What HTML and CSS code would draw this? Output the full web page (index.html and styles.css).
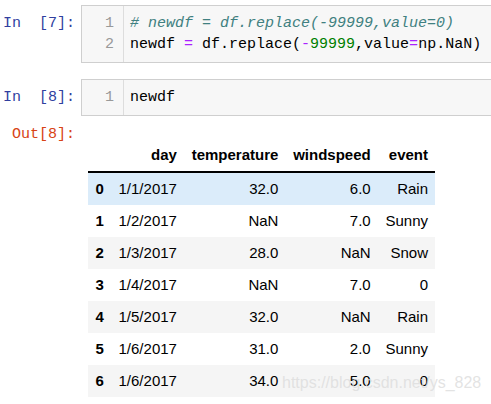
FILE: index.html
```html
<!DOCTYPE html>
<html>
<head>
<meta charset="utf-8">
<link rel="stylesheet" href="styles.css">
</head>
<body>
<div class="nb">
  <div class="cell">
    <div class="prompt in">In&nbsp;&nbsp;[7]:</div>
    <div class="box">
      <div class="gutter"><div>1</div><div>2</div></div>
      <div class="code">
        <div class="line"><span class="c"># newdf = df.replace(-99999,value=0)</span></div>
        <div class="line">newdf <span class="o">=</span> df.replace(<span class="o">-</span><span class="m">99999</span>,value<span class="o">=</span>np.NaN)</div>
      </div>
    </div>
  </div>
  <div class="cell">
    <div class="prompt in">In&nbsp;&nbsp;[8]:</div>
    <div class="box">
      <div class="gutter"><div>1</div></div>
      <div class="code">
        <div class="line">newdf</div>
      </div>
    </div>
  </div>
  <div class="output">
    <div class="prompt out">Out[8]:</div>
    <div class="result">
      <table class="df">
        <thead>
          <tr><th></th><th>day</th><th>temperature</th><th>windspeed</th><th>event</th></tr>
        </thead>
        <tbody>
          <tr class="hover"><th>0</th><td>1/1/2017</td><td>32.0</td><td>6.0</td><td>Rain</td></tr>
          <tr><th>1</th><td>1/2/2017</td><td>NaN</td><td>7.0</td><td>Sunny</td></tr>
          <tr><th>2</th><td>1/3/2017</td><td>28.0</td><td>NaN</td><td>Snow</td></tr>
          <tr><th>3</th><td>1/4/2017</td><td>NaN</td><td>7.0</td><td>0</td></tr>
          <tr><th>4</th><td>1/5/2017</td><td>32.0</td><td>NaN</td><td>Rain</td></tr>
          <tr><th>5</th><td>1/6/2017</td><td>31.0</td><td>2.0</td><td>Sunny</td></tr>
          <tr><th>6</th><td>1/6/2017</td><td>34.0</td><td>5.0</td><td>0</td></tr>
        </tbody>
      </table>
    </div>
  </div>
</div>
<div class="watermark">https://blog.csdn.net/ys_828</div>
</body>
</html>
```
FILE: styles.css
```css
html, body {
  margin: 0;
  padding: 0;
  overflow: hidden;
  background: #fff;
}
.nb {
  padding-top: 5px;
}
.cell {
  display: flex;
  align-items: flex-start;
  margin-bottom: 16px;
}
.prompt {
  width: 75px;
  flex: none;
  text-align: right;
  font-family: "Liberation Mono", monospace;
  font-size: 15px;
  line-height: 21px;
  padding-top: 8px;
  white-space: nowrap;
}
.prompt.in {
  color: #303f9f;
}
.prompt.out {
  color: #d84315;
  padding-top: 0;
}
.box {
  flex: 1;
  display: flex;
  margin-left: 6px;
  margin-right: -20px;
  background: #f7f7f7;
  border: 1px solid #cfcfcf;
  font-family: "Liberation Mono", monospace;
  font-size: 15px;
  line-height: 21px;
}
.gutter {
  width: 32px;
  padding: 7px 9px 7px 0;
  text-align: right;
  color: #999;
  border-right: 1px solid #ddd;
}
.code {
  padding: 7px 0 7px 6px;
  color: #000;
}
.line {
  white-space: pre;
}
.c {
  color: #408080;
  font-style: italic;
}
.o {
  color: #aa22ff;
}
.m {
  color: #008000;
}
.output {
  display: flex;
  margin-top: -8px;
}
.result {
  margin-left: 13px;
  padding-top: 15px;
}
.df {
  border-collapse: collapse;
  border-spacing: 0;
  font-family: "Liberation Sans", Arial, sans-serif;
  font-size: 15px;
  line-height: 18px;
  color: #000;
}
.df th, .df td {
  padding: 7px 7.4px;
  text-align: right;
  white-space: nowrap;
}
.df th {
  font-weight: bold;
}
.df thead tr {
  border-bottom: 2px solid #000;
}
.df tbody tr:nth-child(odd) {
  background: #f5f5f5;
}
.df tbody tr.hover {
  background: #dbecfa;
}
.watermark {
  position: absolute;
  left: 282px;
  top: 373px;
  font-family: "Liberation Sans", Arial, sans-serif;
  font-size: 16px;
  line-height: 20px;
  color: rgba(220, 220, 220, 0.8);
  white-space: nowrap;
}
```
